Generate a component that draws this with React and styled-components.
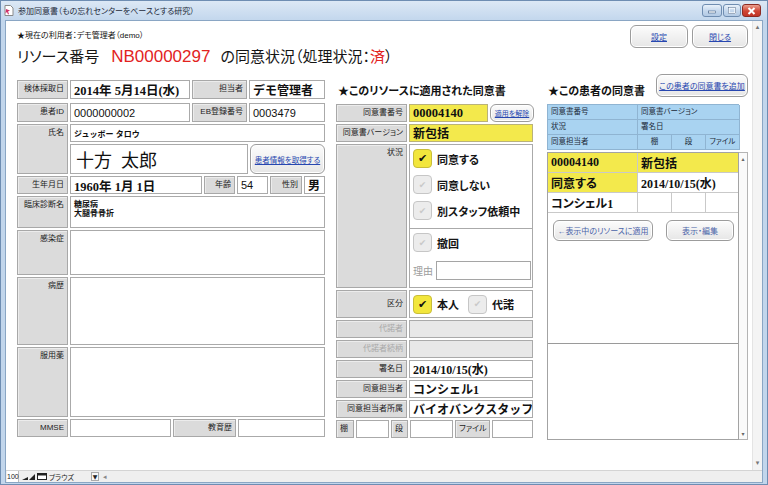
import React from "react";
import styled, { createGlobalStyle, css } from "styled-components";

const SANS = `"Liberation Sans", "Noto Sans CJK JP", sans-serif`;
const SERIF = `"Liberation Serif", "Noto Sans CJK JP", serif`;

const GlobalStyle = createGlobalStyle`
  html, body { margin:0; padding:0; background:#fff; }
  body { font-family:${SANS}; }
  * { box-sizing:border-box; }
`;

// ---- window chrome ----
const Win = styled.div`
  width:768px;
  height:485px;
  display:flex;
  flex-direction:column;
  background:#c2d6ec;
  border:1px solid #6e8db2;
  overflow:hidden;
`;

const TitleBar = styled.div`
  height:19px;
  display:flex;
  align-items:center;
  padding-left:3px;
  background:linear-gradient(#dce8f5, #c3d7ed);
`;

const WinTitle = styled.span`
  margin-left:4px;
  font:8px ${SANS};
  font-feature-settings:"palt";
  color:#1d2a3a;
`;

const WinButtons = styled.div`
  margin-left:auto;
  margin-right:6px;
  align-self:flex-start;
  margin-top:3px;
  display:flex;
  gap:1px;
`;

const WinBtn = styled.div`
  width:${p => p.$w}px;
  height:13px;
  border-radius:3px;
  border:1px solid ${p => (p.$close ? "#8c2a22" : "#6f8db1")};
  background:${p => (p.$close ? "linear-gradient(#eba08f, #cf4535 55%, #c13527)" : "linear-gradient(#e9f1fa, #c3d6ec 55%, #b3cae4)")};
  display:flex;
  align-items:center;
  justify-content:center;
`;

const Frame = styled.div`
  flex:1;
  display:flex;
  padding:0 4px 1px 4px;
`;

const Client = styled.div`
  flex:1;
  display:flex;
  flex-direction:column;
  border:1px solid #8aa6c4;
  background:#fff;
`;

const Main = styled.div`
  flex:1;
  display:flex;
  min-height:0;
`;

const VScroll = styled.div`
  width:10px;
  background:#f4f4f4;
  border-left:1px solid #e4e4e4;
  display:flex;
  flex-direction:column;
  justify-content:space-between;
  align-items:center;
  padding:2px 0 3px;
  font:7px "DejaVu Sans", sans-serif;
  color:#777;
`;

const StatusBar = styled.div`
  height:12px;
  display:flex;
  align-items:center;
  background:#efefef;
  border-top:1px solid #d4d4d4;
  font:7px ${SANS};
  font-feature-settings:"palt";
  color:#222;
  padding-left:1px;
`;

const Zoom = styled.span`
  width:12px;
  height:11px;
  line-height:11px;
  background:#fff;
  border-right:1px solid #bbb;
  text-align:center;
`;

const ModeBox = styled.span`
  width:34px;
  margin-left:2px;
`;

const DropArrow = styled.span`
  width:8px;
  height:9px;
  border:1px solid #aaa;
  background:#f8f8f8;
  display:flex;
  align-items:center;
  justify-content:center;
  font:6px "DejaVu Sans", sans-serif;
  margin-left:8px;
`;

const ScrollLeft = styled.span`
  margin-left:4px;
  color:#888;
`;

// ---- page ----
const Content = styled.div`
  flex:1;
  padding:4px 4px 0 11px;
  display:flex;
  flex-direction:column;
`;

const TopBar = styled.div`
  height:49px;
  display:flex;
  justify-content:space-between;
  align-items:flex-start;
`;

const UserLine = styled.div`
  margin-top:5px;
  font:8px/12px ${SANS};
  font-feature-settings:"palt";
  color:#111;
`;

const Title = styled.h1`
  margin:4px 0 0;
  font:normal 15px/22px ${SANS};
  font-feature-settings:"palt";
  color:#151515;
  white-space:nowrap;
`;

const Code = styled.span`
  font-size:17px;
  color:#e2231e;
  margin:0 10px 0 12px;
`;

const Red = styled.span`
  color:#e2231e;
`;

const TopButtons = styled.div`
  display:flex;
  gap:4px;
`;

const Btn = styled.div`
  width:${p => p.$w}px;
  height:${p => p.$h || 23}px;
  border-radius:6px;
  border:1px solid #9c9c9c;
  background:linear-gradient(#fcfcfc, #e6e6e6);
  box-shadow:inset 0 0 0 1px #fff;
  display:flex;
  align-items:center;
  justify-content:center;
  font:${p => p.$fs || 8}px ${SANS};
  font-feature-settings:"palt";
  color:${p => (p.$plain ? "#4a63a8" : "#2747b0")};
  text-decoration:${p => (p.$plain ? "none" : "underline")};
  white-space:nowrap;
`;

const Columns = styled.div`
  display:flex;
  align-items:flex-start;
`;

const Column = styled.div`
  width:${p => p.$w}px;
  margin-left:${p => p.$ml || 0}px;
  padding-top:${p => p.$pt || 0}px;
  display:flex;
  flex-direction:column;
  gap:2px;
`;

const Row = styled.div`
  display:grid;
  grid-template-columns:${p => p.$cols};
  grid-template-rows:${p => p.$rows || "1fr"};
  height:${p => p.$h}px;
  gap:2px;
  margin-bottom:${p => p.$mb || 0}px;
`;

const Label = styled.div`
  background:#dbdbdb;
  border:1px solid #a8a8a8;
  box-shadow:inset 1px 1px 0 #ececec;
  font:8px ${SANS};
  font-feature-settings:"palt";
  color:${p => (p.$disabled ? "#a9a9a9" : "#1c1c1c")};
  text-align:${p => (p.$align || "right")};
  padding:${p => (p.$center ? "0 3px" : "3px 3px 0")};
  line-height:${p => (p.$center ? `${p.$center}px` : "10px")};
  white-space:nowrap;
  overflow:hidden;
  grid-row:${p => p.$span || "auto"};
`;

const valueFonts = {
  date: css`font:bold 12.5px ${SERIF};`,
  num: css`font:11px ${SANS};`,
  big: css`font:18px ${SERIF}; padding-left:5px;`,
  kana: css`font:bold 8px ${SANS};`,
  note: css`font:bold 8px/9px ${SANS}; align-items:flex-start; padding-top:3px;`,
  jp: css`font:bold 12px ${SERIF};`,
};

const Value = styled.div`
  background:${p => (p.$yellow ? "#f3e94c" : p.$disabled ? "#e8e8e8" : "#fff")};
  border:1px solid ${p => (p.$yellow ? "#b9b27a" : "#aaa")};
  display:flex;
  align-items:center;
  padding-left:3px;
  color:#111;
  white-space:nowrap;
  overflow:hidden;
  font-feature-settings:"palt";
  grid-column:${p => p.$span || "auto"};
  ${p => valueFonts[p.$font || "date"]}
`;

const NoteLines = styled.div`
  display:flex;
  flex-direction:column;
`;

const ColHeader = styled.div`
  height:30px;
  display:flex;
  justify-content:space-between;
  align-items:flex-end;
  margin-bottom:-2px;
`;

const HeadText = styled.div`
  font:bold 11px/14px ${SANS};
  font-feature-settings:"palt";
  color:#111;
  padding:0 0 6px ${p => p.$pl || 2}px;
  white-space:nowrap;
`;

const HeadButton = styled(Btn)`
  align-self:flex-start;
`;

// consent state panel
const Panel = styled.div`
  border:1px solid #aaa;
  background:#fff;
  display:flex;
  flex-direction:column;
`;

const CheckGroup = styled.div`
  height:84px;
  border-bottom:1px solid #aaa;
  padding:4px 3px 0;
  display:flex;
  flex-direction:column;
  gap:7px;
`;

const RevokeGroup = styled.div`
  padding:4px 1px 0 3px;
  display:flex;
  flex-direction:column;
  gap:9px;
`;

const CheckRow = styled.div`
  display:flex;
  align-items:center;
  gap:5px;
  font:bold 11px ${SANS};
  font-feature-settings:"palt";
  color:#151515;
  margin-right:${p => p.$mr || 0}px;
`;

const Check = styled.span`
  width:19px;
  height:19px;
  border-radius:4px;
  display:flex;
  align-items:center;
  justify-content:center;
  background:${p => (p.$on ? "#f2e63c" : "#ececec")};
  border:1px solid ${p => (p.$on ? "#c8bd3a" : "#c6c6c6")};
  color:${p => (p.$on ? "#111" : "#c9c9c9")};
  font:${p => (p.$on ? 11 : 9)}px "DejaVu Sans", sans-serif;
`;

const ReasonRow = styled.div`
  display:flex;
  align-items:center;
  gap:3px;
`;

const ReasonLabel = styled.span`
  font:10px ${SERIF};
  color:#9d9d9d;
  white-space:nowrap;
`;

const ReasonInput = styled.div`
  flex:1;
  height:19px;
  border:1px solid #a5a5a5;
  background:#fff;
`;

const KubunPanel = styled(Value)`
  padding-left:3px;
`;

// patient consent list
const ListHead = styled.div`
  width:192px;
  display:grid;
  grid-template-columns:90px 34px 34px 34px;
  grid-template-rows:repeat(3, 15px);
  border-top:1px solid #8fb4d2;
  border-left:1px solid #8fb4d2;
`;

const HeadCell = styled.div`
  background:#a9d3f1;
  border-right:1px solid #8fb4d2;
  border-bottom:1px solid #8fb4d2;
  font:7.5px/14px ${SANS};
  font-feature-settings:"palt";
  color:#1c2a38;
  padding-left:${p => (p.$center ? 0 : 3)}px;
  text-align:${p => (p.$center ? "center" : "left")};
  grid-column:${p => p.$span || "auto"};
  white-space:nowrap;
`;

const ListWrap = styled.div`
  height:288px;
  display:flex;
`;

const ListBody = styled.div`
  width:192px;
  border:1px solid #a3a3a3;
  display:flex;
  flex-direction:column;
`;

const Record = styled.div`
  height:191px;
  border-bottom:1px solid #9a9a9a;
`;

const RecordGrid = styled.div`
  display:grid;
  grid-template-columns:90px 34px 34px 32px;
  grid-template-rows:repeat(3, 20px);
`;

const RecCell = styled.div`
  background:${p => (p.$yellow ? "#f3e94c" : "#fff")};
  border-right:${p => (p.$last ? "none" : "1px solid #c9c9c9")};
  border-bottom:1px solid #c9c9c9;
  grid-column:${p => p.$span || "auto"};
  display:flex;
  align-items:center;
  padding-left:3px;
  font:bold 12px ${SERIF};
  font-feature-settings:"palt";
  color:#111;
  white-space:nowrap;
`;

const RecordButtons = styled.div`
  display:flex;
  justify-content:space-between;
  padding:7px 4px 0 5px;
`;

const ListScroll = styled.div`
  width:9px;
  border:1px solid #b4b4b4;
  border-left:none;
  background:#fafafa;
  display:flex;
  flex-direction:column;
  justify-content:space-between;
  align-items:center;
  font:6px "DejaVu Sans", sans-serif;
  color:#666;
  padding:2px 0;
`;

function Icon() {
  return (
    <svg width="10" height="11" viewBox="0 0 10 11">
      <path d="M1 .5h5.5L9 3v7.5H1z" fill="#fff" stroke="#8a8a8a" />
      <path d="M2 4l4 1.5-2 1 1 2.5-1 .4-1-2.5-1.5 1.3z" fill="#d0306a" />
    </svg>
  );
}

export default function App() {
  return (
    <>
      <GlobalStyle />
      <Win>
        <TitleBar>
          <Icon />
          <WinTitle>参加同意書（もの忘れセンターをベースとする研究）</WinTitle>
          <WinButtons>
            <WinBtn $w={20}>
              <svg width="8" height="6" viewBox="0 0 8 6"><rect x="0.5" y="3" width="7" height="2" fill="#fff" stroke="#3c5a80" strokeWidth="0.6" /></svg>
            </WinBtn>
            <WinBtn $w={18}>
              <svg width="8" height="7" viewBox="0 0 8 7"><rect x="0.8" y="0.8" width="6.4" height="5.4" fill="none" stroke="#fff" strokeWidth="1.6" /><rect x="0.3" y="0.3" width="7.4" height="6.4" fill="none" stroke="#3c5a80" strokeWidth="0.5" /></svg>
            </WinBtn>
            <WinBtn $w={19} $close>
              <svg width="9" height="8" viewBox="0 0 9 8"><path d="M1.5 1l6 6M7.5 1l-6 6" stroke="#fff" strokeWidth="2" /></svg>
            </WinBtn>
          </WinButtons>
        </TitleBar>
        <Frame>
          <Client>
            <Main>
              <Content>
                <TopBar>
                  <div>
                    <UserLine>★現在の利用者：デモ管理者（demo）</UserLine>
                    <Title>
                      リソース番号<Code>NB00000297</Code>の同意状況（処理状況：<Red>済</Red>）
                    </Title>
                  </div>
                  <TopButtons>
                    <Btn $w={58}>設定</Btn>
                    <Btn $w={56}>閉じる</Btn>
                  </TopButtons>
                </TopBar>

                <Columns>
                  {/* patient */}
                  <Column $w={308} $pt={6}>
                    <Row $cols="51px 120px 55px 76px" $h={19} $mb={2}>
                      <Label>検体採取日</Label>
                      <Value>2014年 5月14日(水)</Value>
                      <Label>担当者</Label>
                      <Value $font="jp">デモ管理者</Value>
                    </Row>
                    <Row $cols="51px 120px 55px 76px" $h={19}>
                      <Label>患者ID</Label>
                      <Value $font="num">0000000002</Value>
                      <Label>EB登録番号</Label>
                      <Value $font="num">0003479</Value>
                    </Row>
                    <Row $cols="51px 1fr 75px" $rows="18px 30px" $h={50}>
                      <Label $span="1 / 3">氏名</Label>
                      <Value $font="kana" $span="2 / 4">ジュッボー タロウ</Value>
                      <Value $font="big">十方&nbsp;&nbsp;太郎</Value>
                      <Btn $w={75} $h={30} $fs={7.5}>患者情報を取得する</Btn>
                    </Row>
                    <Row $cols="51px 132px 31px 31px 32px 21px" $h={18}>
                      <Label>生年月日</Label>
                      <Value>1960年 1月 1日</Value>
                      <Label>年齢</Label>
                      <Value $font="num">54</Value>
                      <Label>性別</Label>
                      <Value $font="jp">男</Value>
                    </Row>
                    <Row $cols="51px 1fr" $h={32}>
                      <Label>臨床診断名</Label>
                      <Value $font="note">
                        <NoteLines>
                          <span>糖尿病</span>
                          <span>大腿骨骨折</span>
                        </NoteLines>
                      </Value>
                    </Row>
                    <Row $cols="51px 1fr" $h={45}>
                      <Label>感染症</Label>
                      <Value />
                    </Row>
                    <Row $cols="51px 1fr" $h={68}>
                      <Label>病歴</Label>
                      <Value />
                    </Row>
                    <Row $cols="51px 1fr" $h={70}>
                      <Label>服用薬</Label>
                      <Value />
                    </Row>
                    <Row $cols="51px 101px 63px 87px" $h={18}>
                      <Label>MMSE</Label>
                      <Value />
                      <Label>教育歴</Label>
                      <Value />
                    </Row>
                  </Column>

                  {/* consent applied to this resource */}
                  <Column $w={197} $ml={11}>
                    <ColHeader>
                      <HeadText>★このリソースに適用された同意書</HeadText>
                    </ColHeader>
                    <Row $cols="71px 79px 44px" $h={18}>
                      <Label>同意書番号</Label>
                      <Value $yellow>00004140</Value>
                      <Btn $w={44} $h={18} $fs={7}>適用を解除</Btn>
                    </Row>
                    <Row $cols="71px 124px" $h={18}>
                      <Label>同意書バージョン</Label>
                      <Value $yellow $font="jp">新包括</Value>
                    </Row>
                    <Row $cols="71px 124px" $h={144}>
                      <Label>状況</Label>
                      <Panel>
                        <CheckGroup>
                          <CheckRow><Check $on>✔</Check>同意する</CheckRow>
                          <CheckRow><Check>✔</Check>同意しない</CheckRow>
                          <CheckRow><Check>✔</Check>別スタッフ依頼中</CheckRow>
                        </CheckGroup>
                        <RevokeGroup>
                          <CheckRow><Check>✔</Check>撤回</CheckRow>
                          <ReasonRow>
                            <ReasonLabel>理由</ReasonLabel>
                            <ReasonInput />
                          </ReasonRow>
                        </RevokeGroup>
                      </Panel>
                    </Row>
                    <Row $cols="71px 124px" $h={28}>
                      <Label $center={26}>区分</Label>
                      <KubunPanel>
                        <CheckRow $mr={9}><Check $on>✔</Check>本人</CheckRow>
                        <CheckRow><Check>✔</Check>代諾</CheckRow>
                      </KubunPanel>
                    </Row>
                    <Row $cols="71px 124px" $h={18}>
                      <Label $disabled>代諾者</Label>
                      <Value $disabled />
                    </Row>
                    <Row $cols="71px 124px" $h={18}>
                      <Label $disabled>代諾者続柄</Label>
                      <Value $disabled />
                    </Row>
                    <Row $cols="71px 124px" $h={18}>
                      <Label>署名日</Label>
                      <Value $font="jp">2014/10/15(水)</Value>
                    </Row>
                    <Row $cols="71px 124px" $h={18}>
                      <Label>同意担当者</Label>
                      <Value $font="jp">コンシェル1</Value>
                    </Row>
                    <Row $cols="71px 124px" $h={18}>
                      <Label>同意担当者所属</Label>
                      <Value $font="jp">バイオバンクスタッフ</Value>
                    </Row>
                    <Row $cols="18px 33px 17px 43px 35px 41px" $h={18}>
                      <Label $align="left">棚</Label>
                      <Value />
                      <Label $align="left">段</Label>
                      <Value />
                      <Label $align="center">ファイル</Label>
                      <Value />
                    </Row>
                  </Column>

                  {/* this patient's consents */}
                  <Column $w={201} $ml={14}>
                    <ColHeader>
                      <HeadText $pl={1}>★この患者の同意書</HeadText>
                      <HeadButton $w={92}>この患者の同意書を追加</HeadButton>
                    </ColHeader>
                    <ListHead>
                      <HeadCell>同意書番号</HeadCell>
                      <HeadCell $span="2 / 5">同意書バージョン</HeadCell>
                      <HeadCell>状況</HeadCell>
                      <HeadCell $span="2 / 5">署名日</HeadCell>
                      <HeadCell>同意担当者</HeadCell>
                      <HeadCell $center>棚</HeadCell>
                      <HeadCell $center>段</HeadCell>
                      <HeadCell $center>ファイル</HeadCell>
                    </ListHead>
                    <ListWrap>
                      <ListBody>
                        <Record>
                          <RecordGrid>
                            <RecCell $yellow>00004140</RecCell>
                            <RecCell $yellow $last $span="2 / 5">新包括</RecCell>
                            <RecCell $yellow>同意する</RecCell>
                            <RecCell $last $span="2 / 5">2014/10/15(水)</RecCell>
                            <RecCell>コンシェル1</RecCell>
                            <RecCell />
                            <RecCell />
                            <RecCell $last />
                          </RecordGrid>
                          <RecordButtons>
                            <Btn $w={100} $h={21} $plain>←表示中のリソースに適用</Btn>
                            <Btn $w={68} $h={21} $plain>表示・編集</Btn>
                          </RecordButtons>
                        </Record>
                      </ListBody>
                      <ListScroll>
                        <span>▴</span>
                        <span>▾</span>
                      </ListScroll>
                    </ListWrap>
                  </Column>
                </Columns>
              </Content>
              <VScroll>
                <span>▴</span>
                <span>▾</span>
              </VScroll>
            </Main>
            <StatusBar>
              <Zoom>100</Zoom>
              <svg width="26" height="9" viewBox="0 0 26 9" style={{ marginLeft: 2 }}>
                <path d="M1 8h6V5z" fill="#222" />
                <path d="M8 8h6V2z" fill="#222" />
                <rect x="16.5" y="1.5" width="9" height="6" fill="#fff" stroke="#222" />
                <rect x="16.5" y="1.5" width="9" height="2" fill="#222" />
              </svg>
              <ModeBox>ブラウズ</ModeBox>
              <DropArrow>▼</DropArrow>
              <ScrollLeft>◂</ScrollLeft>
            </StatusBar>
          </Client>
        </Frame>
      </Win>
    </>
  );
}
